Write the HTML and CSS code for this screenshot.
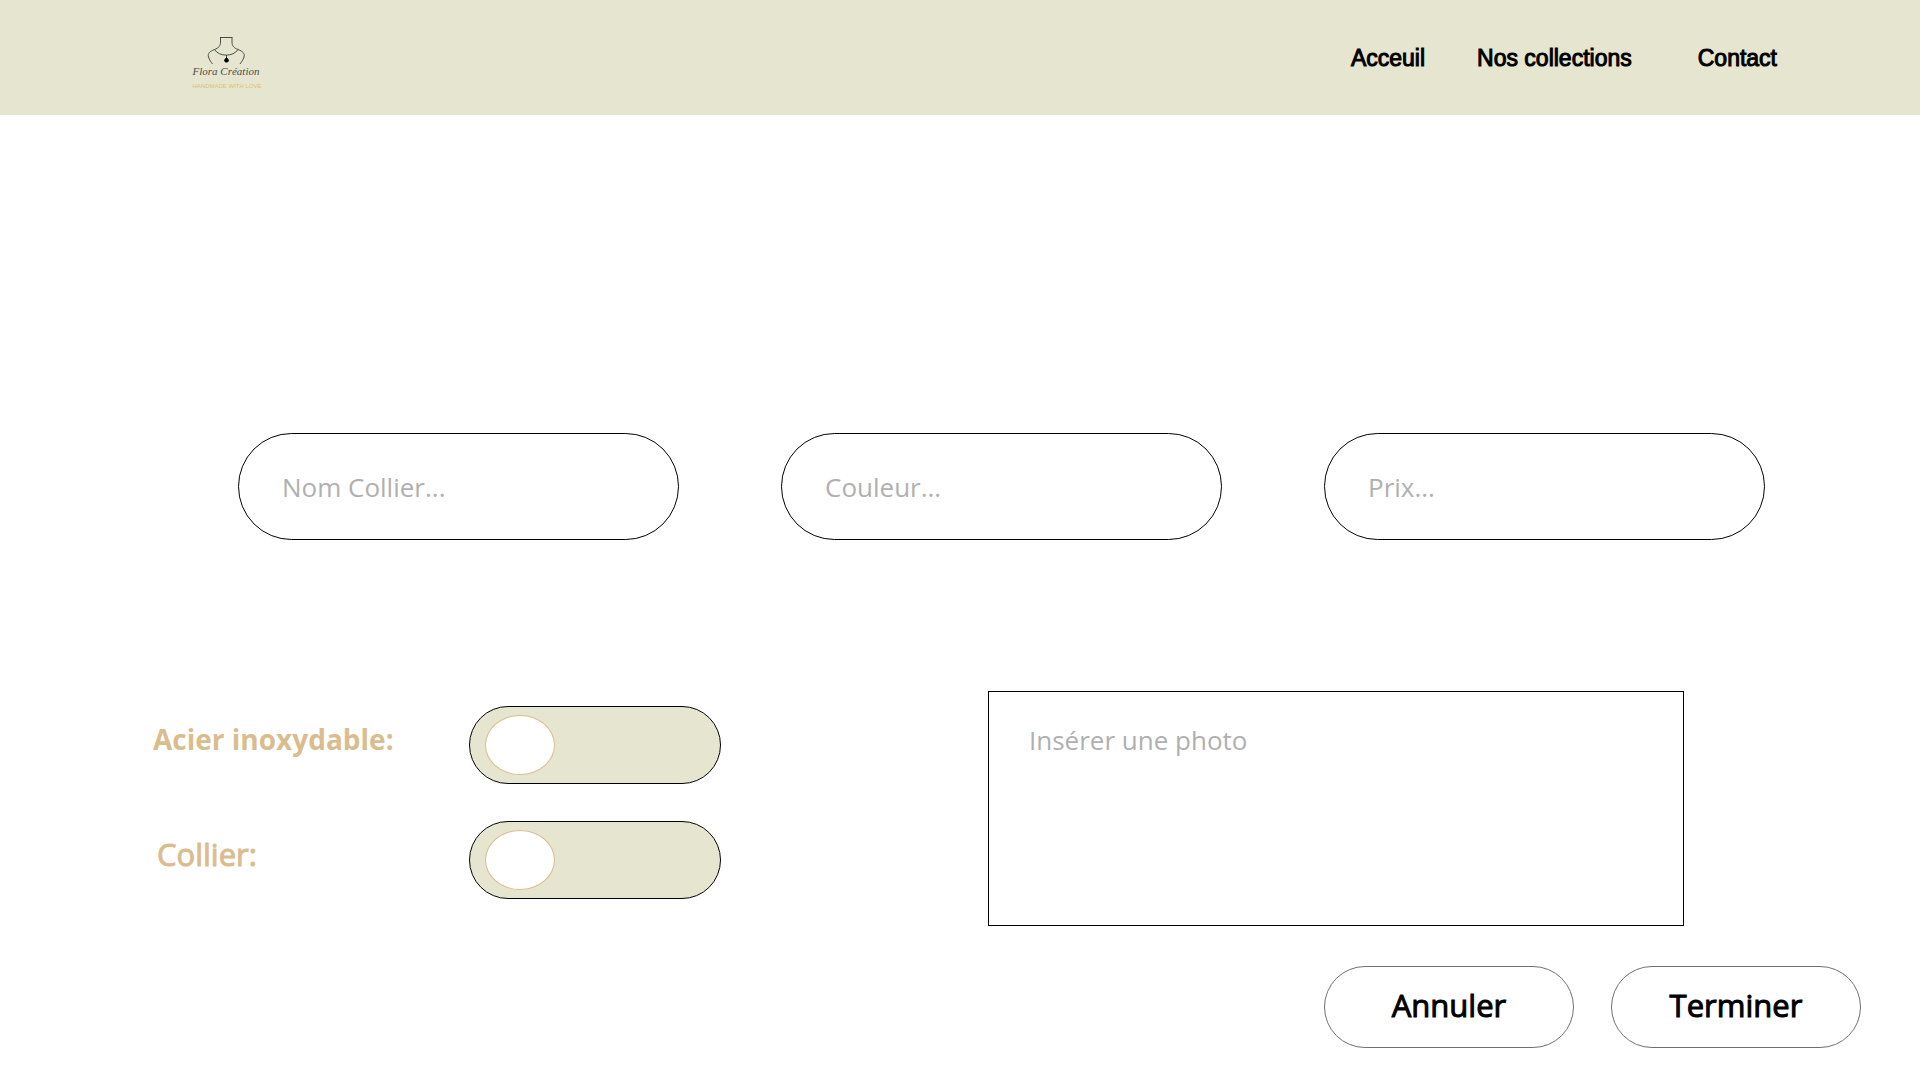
FILE: index.html
```html
<!DOCTYPE html>
<html lang="fr">
<head>
  <meta charset="utf-8">
  <meta name="viewport" content="width=device-width, initial-scale=1">
  <title>Flora Création</title>
  <link rel="stylesheet" href="styles.css">
</head>
<body>
  <header class="site-header">
    <a class="logo" href="#" aria-label="Flora Création">
      <svg class="logo-art" viewBox="0 0 76 56" width="76" height="56">
        <g class="logo-lines">
          <path d="M32 3.500H44.500M32.500 3.500V8C32.500 12 30.500 14 26.500 15.500C21.500 17.500 19.500 19.500 20.500 23C21.500 26 23 28 24.500 30M44 3.500V8C44 12 46 14 50 15.500C55 17.500 57 19.500 56 23C55 26 53.500 28 52 30"/>
          <path d="M26.500 15.500C31 23 45.500 23 50 15.500M38.500 21V24"/>
        </g>
        <path class="logo-drop" d="M38.500 23.500C36 26 36 28 38.500 28C41 28 41 26 38.500 23.500Z"/>
        <text class="logo-name" x="38" y="41" text-anchor="middle">Flora Création</text>
        <text class="logo-tag" x="39" y="54" text-anchor="middle">HANDMADE WITH LOVE</text>
      </svg>
    </a>
    <nav class="nav">
      <a class="nav-link" href="#">Acceuil</a>
      <a class="nav-link" href="#">Nos collections</a>
      <a class="nav-link nav-link-last" href="#">Contact</a>
    </nav>
  </header>

  <main>
    <form class="product-form">
      <div class="fields">
        <input class="field" type="text" name="nom" aria-label="Nom Collier" placeholder="Nom Collier...">
        <input class="field" type="text" name="couleur" aria-label="Couleur" placeholder="Couleur...">
        <input class="field" type="text" name="prix" aria-label="Prix" placeholder="Prix...">
      </div>
      <div class="details">
        <div class="options">
          <label class="option-label option-label-strong" for="acier">Acier inoxydable:</label>
          <input class="switch" type="checkbox" id="acier" name="acier">
          <label class="option-label" for="collier">Collier:</label>
          <input class="switch" type="checkbox" id="collier" name="collier">
        </div>
        <textarea class="photo" name="photo" aria-label="Insérer une photo" placeholder="Insérer une photo"></textarea>
      </div>
      <div class="actions">
        <button class="action" type="button">Annuler</button>
        <button class="action" type="submit">Terminer</button>
      </div>
    </form>
  </main>
</body>
</html>
```
FILE: styles.css
```css
*,
*::before {
  box-sizing: border-box;
}

body {
  margin: 0;
  background: #fff;
  color: #000;
  font-family: "Open Sans", "Noto Sans", sans-serif;
}

.site-header {
  display: flex;
  justify-content: space-between;
  align-items: center;
  height: 115px;
  padding: 0 143px 0 188px;
  background: #e6e6d0;
}

.logo {
  display: block;
  padding-top: 8px;
}

.logo-art {
  display: block;
}

.logo-lines {
  fill: none;
  stroke: #4a4d44;
  stroke-width: 1px;
}

.logo-drop {
  fill: #000;
  stroke: #000;
}

.logo-name {
  fill: #4a4d44;
  font: italic 11px "Liberation Serif", serif;
}

.logo-tag {
  fill: #dcc070;
  font: 6px "Liberation Sans", sans-serif;
}

.nav {
  display: flex;
  gap: 52px;
}

.nav-link {
  color: #000;
  font: 23px/28px "Liberation Sans", sans-serif;
  text-decoration: none;
  -webkit-text-stroke: 1px #000;
}

.nav-link-last {
  margin-left: 14px;
}

.fields {
  display: grid;
  grid-template-columns: repeat(3, 1fr);
  gap: 102px;
  margin-top: 318px;
  padding: 0 155px 0 238px;
}

.field {
  width: 100%;
  height: 107px;
  padding: 0 43px;
  border: 1px solid #000;
  border-radius: 54px;
  background: #fff;
  font: 26px "Open Sans", sans-serif;
}

.field::placeholder,
.photo::placeholder {
  color: #b0b0b0;
  opacity: 1;
}

.details {
  display: grid;
  grid-template-columns: 835fr 696fr;
  margin-top: 151px;
  padding: 0 236px 0 153px;
}

.options {
  display: grid;
  grid-template-columns: 316px 252px;
  align-content: start;
  align-items: center;
  row-gap: 37px;
  padding-top: 15px;
}

.option-label {
  padding: 0 0 12px 4px;
  color: #dabd8e;
  font-size: 31px;
  line-height: 40px;
  -webkit-text-stroke: 1px #dabd8e;
}

.option-label-strong {
  padding-left: 0;
  font-size: 28px;
  font-weight: 700;
  -webkit-text-stroke: 0;
}

.switch {
  appearance: none;
  display: flex;
  align-items: center;
  width: 252px;
  height: 78px;
  margin: 0;
  padding: 0 15px;
  border: 1px solid #000;
  border-radius: 39px;
  background: #e6e6d0;
}

.switch::before {
  content: "";
  width: 70px;
  height: 60px;
  border: 1px solid #dabd8e;
  border-radius: 50%;
  background: #fff;
}

.switch:checked {
  justify-content: flex-end;
}

.photo {
  display: block;
  width: 100%;
  height: 235px;
  padding: 28px 40px;
  border: 1px solid #000;
  background: #fff;
  font: 26px/40px "Open Sans", sans-serif;
  resize: none;
}

.actions {
  display: flex;
  justify-content: flex-end;
  gap: 37px;
  margin-top: 40px;
  padding: 0 59px 32px;
}

.action {
  width: 250px;
  height: 82px;
  padding: 0 0 4px;
  border: 1px solid #707070;
  border-radius: 41px;
  background: #fff;
  color: #000;
  font: 31px "Open Sans", sans-serif;
  -webkit-text-stroke: 1px #000;
}
```
